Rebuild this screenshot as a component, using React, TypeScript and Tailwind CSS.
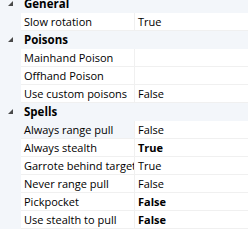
import React from "react";

type Prop = { name: string; value: string; bold?: boolean; selected?: boolean };
type Cat = { title: string; props: Prop[] };

const data: Cat[] = [
  { title: "General", props: [{ name: "Slow rotation", value: "True" }] },
  {
    title: "Poisons",
    props: [
      { name: "Mainhand Poison", value: "" },
      { name: "Offhand Poison", value: "" },
      { name: "Use custom poisons", value: "False" },
    ],
  },
  {
    title: "Spells",
    props: [
      { name: "Always range pull", value: "False", selected: true },
      { name: "Always stealth", value: "True", bold: true },
      { name: "Garrote behind target", value: "True" },
      { name: "Never range pull", value: "False" },
      { name: "Pickpocket", value: "False", bold: true },
      { name: "Use stealth to pull", value: "False", bold: true },
    ],
  },
];

function Arrow() {
  return (
    <svg width="5" height="5" viewBox="0 0 5 5" className="block">
      <polygon points="5,0 5,5 0,5" fill="#4a4a4a" />
    </svg>
  );
}

export default function App() {
  return (
    <div
      className="w-[248px] h-[244px] overflow-hidden bg-white text-[11px] text-black"
      style={{ fontFamily: '"Open Sans", "Noto Sans", sans-serif' }}
    >
      <div className="-mt-[5px] flex flex-col">
        {data.map((c) => (
          <React.Fragment key={c.title}>
            <div className="flex h-[18px] items-center bg-[#f3f6fa]">
              <div className="flex w-[21px] justify-start pl-[8px] -mt-[2px]">
                <Arrow />
              </div>
              <span className="pl-[3px] font-bold leading-none text-[11.5px]">{c.title}</span>
            </div>
            {c.props.map((p) => (
              <div key={p.name} className="flex h-[18px] bg-[#f3f6fa]">
                <div
                  className={`flex w-[114px] ml-[21px] items-center overflow-hidden whitespace-nowrap border-b border-r border-[#f0f0f0] pl-[3px] leading-none ${
                    p.selected ? "bg-[#f3f6fa]" : "bg-white"
                  }`}
                >
                  {p.name}
                </div>
                <div
                  className={`flex flex-1 items-center border-b border-[#f0f0f0] bg-white pl-[3px] leading-none ${
                    p.bold ? "font-bold" : ""
                  }`}
                >
                  {p.value}
                </div>
              </div>
            ))}
          </React.Fragment>
        ))}
      </div>
    </div>
  );
}
